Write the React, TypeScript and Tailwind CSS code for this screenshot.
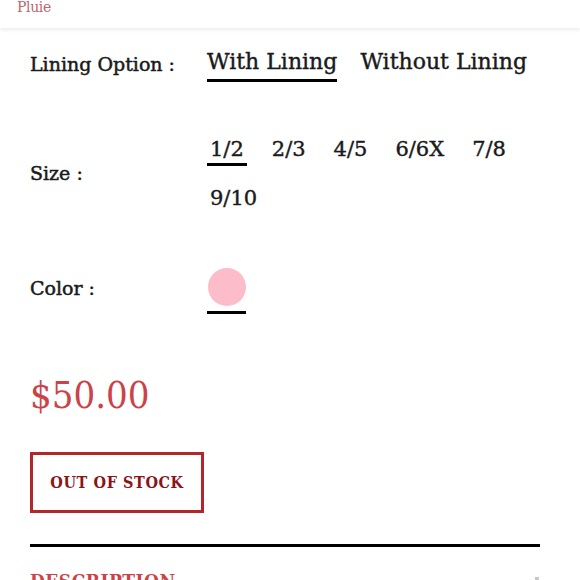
import React from 'react';

const sizes = ['1/2', '2/3', '4/5', '6/6X', '7/8', '9/10'];

const App: React.FC = () => {
  return (
    <div className="w-[580px] h-[580px] overflow-hidden bg-white font-['DejaVu_Serif',serif] text-[#1a1a1a]">
      <div className="h-[28px] overflow-hidden bg-white shadow-[0_2px_4px_rgba(0,0,0,0.08)] relative z-10">
        <p className="pl-[17px] -mt-[1px] text-[14px] leading-[16px] text-[#c0656f] tracking-tight">Pluie</p>
      </div>

      <div className="px-[30px]">
        <div className="flex items-center h-[50px] mt-[11px]">
          <span className="w-[177px] text-[19px] [-webkit-text-stroke:0.5px]">Lining Option :</span>
          <div className="flex gap-[23px]">
            <button className="text-[22px] leading-[26px] pt-[2px] pb-[4px] border-b-[3px] border-black [-webkit-text-stroke:0.4px]">With Lining</button>
            <button className="text-[22px] leading-[26px] pt-[2px] pb-[4px] border-b-[3px] border-transparent [-webkit-text-stroke:0.4px]">Without Lining</button>
          </div>
        </div>

        <div className="flex items-center mt-[43px]">
          <span className="w-[177px] text-[19px] [-webkit-text-stroke:0.5px]">Size :</span>
          <div className="flex flex-wrap w-[320px] pt-[4px] gap-x-[22px] gap-y-[19px]">
            {sizes.map((s, i) => (
              <button
                key={s}
                className={
                  'px-[3px] text-[21px] leading-[26px] pb-[1px] border-b-[3px] [-webkit-text-stroke:0.4px] ' +
                  (i === 0 ? 'border-black' : 'border-transparent')
                }
              >
                {s}
              </button>
            ))}
          </div>
        </div>

        <div className="flex items-center mt-[48px]">
          <span className="w-[177px] text-[19px] [-webkit-text-stroke:0.5px]">Color :</span>
          <div className="flex flex-col items-center w-[39px] gap-[5px] pt-[5px]">
            <div className="w-[38px] h-[38px] rounded-full bg-[#fdbcc9]" />
            <div className="w-[39px] h-[3px] bg-black" />
          </div>
        </div>

        <p className="mt-[59px] text-[38px] leading-[44px] text-[#cb4349] font-['DejaVu_Serif_Condensed','DejaVu_Serif',serif] font-light">$50.00</p>

        <button className="mt-[35px] w-[174px] h-[61px] border-[3px] border-[#b5262b] text-[16px] font-bold tracking-[0.6px] text-[#8c1419] font-['DejaVu_Serif_Condensed','DejaVu_Serif',serif]">
          OUT OF STOCK
        </button>

        <div className="mt-[31px] h-[3px] w-[510px] bg-black" />

        <div className="flex justify-between items-start mt-[23px]">
          <span className="text-[19px] leading-[22px] font-bold tracking-[0.5px] text-[#cb4349] font-['DejaVu_Serif_Condensed','DejaVu_Serif',serif]">DESCRIPTION</span>
          <span className="w-[4px] h-[3px] mt-[7px] bg-[#c8c8c8] mr-[11px]" />
        </div>
      </div>
    </div>
  );
};

export default App;
